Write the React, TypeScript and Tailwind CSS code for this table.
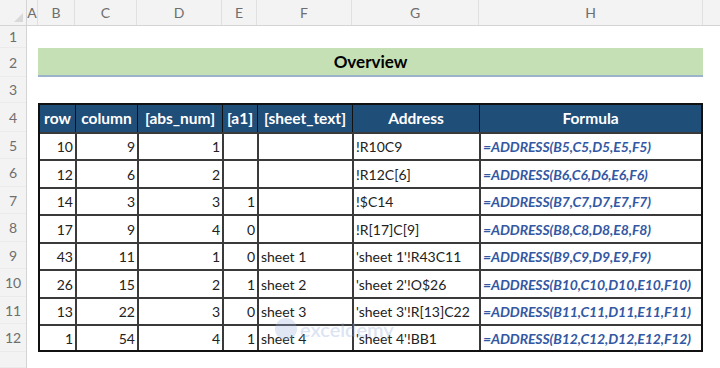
import React from "react";

const font = { fontFamily: "Lato, 'Open Sans', 'Liberation Sans', sans-serif" };

const colLetters: [string, number][] = [
  ["A", 11],
  ["B", 37],
  ["C", 62],
  ["D", 85],
  ["E", 35],
  ["F", 95],
  ["G", 127],
  ["H", 224],
];

const cellW = [35, 62, 85, 35, 95, 127, 222];
const headers = ["row", "column", "[abs_num]", "[a1]", "[sheet_text]", "Address", "Formula"];

const data: (string | number)[][] = [
  [10, 9, 1, "", "", "!R10C9", "=ADDRESS(B5,C5,D5,E5,F5)"],
  [12, 6, 2, "", "", "!R12C[6]", "=ADDRESS(B6,C6,D6,E6,F6)"],
  [14, 3, 3, 1, "", "!$C14", "=ADDRESS(B7,C7,D7,E7,F7)"],
  [17, 9, 4, 0, "", "!R[17]C[9]", "=ADDRESS(B8,C8,D8,E8,F8)"],
  [43, 11, 1, 0, "sheet 1", "'sheet 1'!R43C11", "=ADDRESS(B9,C9,D9,E9,F9)"],
  [26, 15, 2, 1, "sheet 2", "'sheet 2'!O$26", "=ADDRESS(B10,C10,D10,E10,F10)"],
  [13, 22, 3, 0, "sheet 3", "'sheet 3'!R[13]C22", "=ADDRESS(B11,C11,D11,E11,F11)"],
  [1, 54, 4, 1, "sheet 4", "'sheet 4'!BB1", "=ADDRESS(B12,C12,D12,E12,F12)"],
];

const bodyH = [27, 28, 27, 28, 27, 28, 27, 26];
const labelRows: [string, number][] = [
  ["1", 22],
  ["2", 29],
  ["3", 26],
  ["4", 29],
  ["5", 27],
  ["6", 28],
  ["7", 27],
  ["8", 28],
  ["9", 27],
  ["10", 28],
  ["11", 27],
  ["12", 28],
  ["", 16],
];

export default function App() {
  return (
    <div className="w-[720px] h-[368px] overflow-hidden bg-white relative" style={font}>
      {/* column header */}
      <div className="flex h-[26px] bg-[#f3f3f3] border-b border-[#d4d4d4]">
        <div className="w-[27px] shrink-0 border-r border-[#d4d4d4] relative">
          <div className="absolute right-[3px] bottom-[3px] w-0 h-0 border-l-[9px] border-l-transparent border-b-[9px] border-b-[#d9d9d9]" />
        </div>
        {colLetters.map(([l, w]) => (
          <div
            key={l}
            className="shrink-0 flex items-center justify-center border-r border-[#e0e0e0] text-[14px] text-[#6e6e6e]"
            style={{ width: w }}
          >
            {l}
          </div>
        ))}
        <div className="flex-1" />
      </div>

      <div className="flex">
        {/* row labels */}
        <div className="w-[27px] shrink-0 bg-[#f3f3f3] border-r border-[#d4d4d4] flex flex-col">
          {labelRows.map(([l, h], i) => (
            <div
              key={i}
              className="flex items-center justify-center text-[14px] text-[#6e6e6e] border-b border-[#ebebeb]"
              style={{ height: h }}
            >
              {l}
            </div>
          ))}
        </div>

        {/* sheet content */}
        <div className="pl-[11px] flex flex-col relative">
          <div className="h-[22px]" />
          <div className="w-[665px] h-[29px] bg-[#c5e0b4] border-b-2 border-[#9cb3cc] flex items-center justify-center text-[17px] font-bold text-black">
            Overview
          </div>
          <div className="h-[26px]" />
          <div className="w-[665px] border-2 border-[#111] flex flex-col">
            <div className="flex h-[27px] bg-[#1f4e79]">
              {headers.map((h, i) => (
                <div
                  key={h}
                  className={`shrink-0 flex items-center justify-center text-white font-bold text-[15.5px] ${i > 0 ? "border-l border-[#111]" : ""}`}
                  style={{ width: cellW[i] }}
                >
                  {h}
                </div>
              ))}
            </div>
            {data.map((row, r) => (
              <div key={r} className="flex border-t-2 border-[#3a3a3a]" style={{ height: bodyH[r] }}>
                {row.map((v, c) => {
                  const num = c < 4;
                  const formula = c === 6;
                  return (
                    <div
                      key={c}
                      className={`shrink-0 flex items-center whitespace-nowrap overflow-hidden text-[14px] ${
                        c > 0 ? "border-l-2 border-[#3a3a3a]" : ""
                      } ${num ? "justify-end pr-[2px] text-[#222]" : "pl-[2px] text-[#222]"} ${
                        formula ? "italic font-bold text-[#3358a3] tracking-[-0.1px]" : ""
                      }`}
                      style={{ width: cellW[c] }}
                    >
                      {v}
                    </div>
                  );
                })}
              </div>
            ))}
          </div>

          {/* watermark */}
          <div className="absolute left-[248px] top-[292px] flex items-center gap-[3px] opacity-30 pointer-events-none">
            <div className="w-[22px] h-[22px] rounded-full bg-[#9db3dc]" />
            <span className="text-[20px] leading-none text-[#8fa8d8] font-semibold">exceldemy</span>
          </div>
        </div>
      </div>
    </div>
  );
}
